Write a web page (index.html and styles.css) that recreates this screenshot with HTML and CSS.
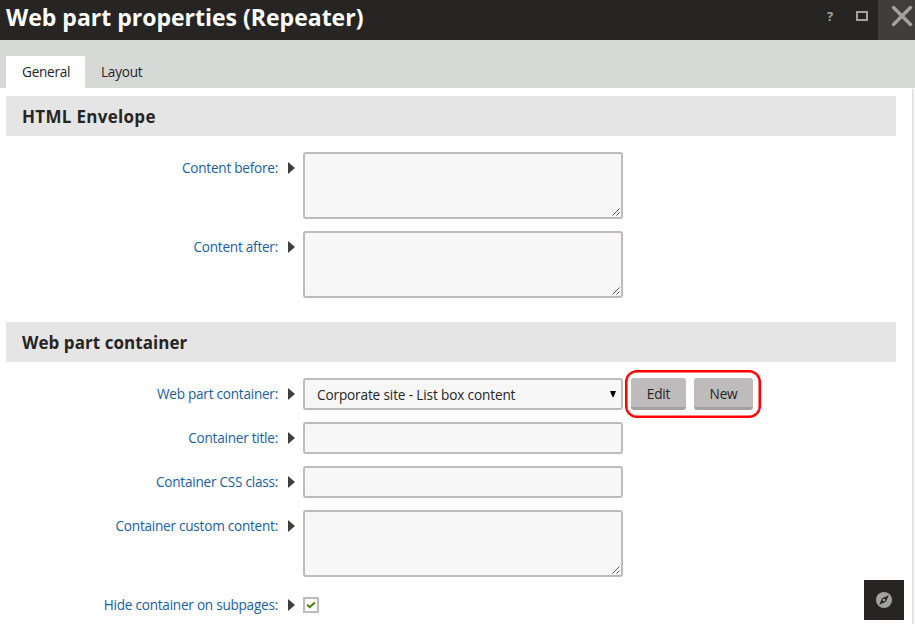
FILE: index.html
```html
<!DOCTYPE html>
<html lang="en">
<head>
<meta charset="utf-8">
<title>Web part properties (Repeater)</title>
<link rel="stylesheet" href="styles.css">
</head>
<body>
<header class="titlebar">
  <h1>Web part properties (Repeater)</h1>
  <div class="window-actions">
    <span class="help">?</span>
    <span class="maximize"></span>
    <span class="close"><svg width="37" height="40" viewBox="0 0 37 40"><path d="M15.5 7.5 32.5 24.5M32.5 7.5 15.5 24.5" stroke="#a3a2a2" stroke-width="3.4" stroke-linecap="round"/></svg></span>
  </div>
</header>
<nav class="tabs">
  <span class="tab active">General</span>
  <span class="tab">Layout</span>
</nav>
<div class="body">
<main class="content">
  <h2 class="first">HTML Envelope</h2>
  <div class="form">
    <div class="row"><label>Content before:</label><i class="arrow"></i><div class="field area"><svg class="grip" width="8" height="8" viewBox="0 0 8 8"><path d="M0.5 7.5 7.5 0.5M4.5 7.5 7.5 4.5"/></svg></div></div>
    <div class="row"><label>Content after:</label><i class="arrow"></i><div class="field area"><svg class="grip" width="8" height="8" viewBox="0 0 8 8"><path d="M0.5 7.5 7.5 0.5M4.5 7.5 7.5 4.5"/></svg></div></div>
  </div>
  <h2 class="second">Web part container</h2>
  <div class="form">
    <div class="row"><label>Web part container:</label><i class="arrow"></i><div class="field select"><span>Corporate site - List box content</span><svg width="6" height="6" viewBox="0 0 6 6"><path d="M0 0H6L3.5 6H2.5Z"/></svg></div>
      <div class="buttons"><span class="btn edit">Edit</span><span class="btn new">New</span></div></div>
    <div class="row"><label>Container title:</label><i class="arrow"></i><div class="field"></div></div>
    <div class="row"><label>Container CSS class:</label><i class="arrow"></i><div class="field"></div></div>
    <div class="row"><label>Container custom content:</label><i class="arrow"></i><div class="field area"><svg class="grip" width="8" height="8" viewBox="0 0 8 8"><path d="M0.5 7.5 7.5 0.5M4.5 7.5 7.5 4.5"/></svg></div></div>
    <div class="row"><label>Hide container on subpages:</label><i class="arrow"></i><span class="check"><svg width="12" height="12" viewBox="0 0 12 12"><path d="M2.2 5.8 4.8 8.2 9.8 3.6"/></svg></span></div>
  </div>
</main>
<div class="scroll"></div>
</div>
<div class="compass"><svg width="16" height="16" viewBox="0 0 16 16"><circle cx="8" cy="8" r="8" fill="#a3a2a2"/><path d="M12.8 3.2 9.8 9.8 3.2 12.8 6.2 6.2Z" fill="#262524"/><circle cx="8" cy="8" r="1.3" fill="#a3a2a2"/></svg></div>
</body>
</html>
```
FILE: styles.css
```css
* { box-sizing: border-box; }
body { margin: 0; width: 915px; height: 624px; overflow: hidden; background: #fff; color: #262524; font: 14px/20px "Open Sans", "Noto Sans", sans-serif; }
.titlebar { height: 40px; background: #262524; display: flex; justify-content: space-between; }
h1 { margin: 0; padding-left: 6px; font-size: 23px; line-height: 35px; color: #fff; font-weight: 700; white-space: nowrap; }
.window-actions { display: flex; color: #a3a2a2; }
.help { width: 16px; margin-right: 18px; text-align: center; font: 700 13px/32px "Open Sans", sans-serif; }
.maximize { width: 12px; height: 10px; margin: 11px 10px 0 0; border: 2px solid #a3a2a2; }
.close { width: 37px; height: 40px; background: #403e3d; }
.close svg { display: block; fill: none; }
.tabs { height: 48px; background: #d6d9d6; padding: 16px 0 0 6px; display: flex; }
.tab { height: 32px; padding: 0 16px; line-height: 32px; font-size: 13.6px; letter-spacing: -0.25px; white-space: nowrap; }
.tab.active { background: #fff; width: 79px; }
.body { display: flex; height: 536px; }
.content { width: 912px; padding: 8px 16px 0 6px; }
.scroll { width: 3px; margin-top: 1px; border-left: 1px solid #dcdcdc; background: #f3f3f3; }
h2 { margin: 0; height: 40px; padding-left: 16px; background: #e5e5e5; font-size: 17px; line-height: 41px; font-weight: 700; white-space: nowrap; }
h2.first { letter-spacing: 0.3px; }
h2.second { margin-top: 24px; letter-spacing: 0.05px; }
.form { padding-top: 16px; display: flex; flex-direction: column; gap: 12px; }
.row { display: flex; align-items: flex-start; }
label { width: 272px; text-align: right; color: #1a6099; line-height: 32px; font-size: 13.6px; letter-spacing: -0.25px; white-space: nowrap; }
.arrow { width: 0; height: 0; margin: 10px 8px 0 10px; border-left: 7px solid #403e3d; border-top: 6px solid transparent; border-bottom: 6px solid transparent; }
.field { width: 320px; height: 32px; border: 2px solid #bdbbbb; border-radius: 3px; background: #f7f7f7; }
.area { height: 67px; display: flex; align-items: flex-end; justify-content: flex-end; padding: 0 1px 1px 0; }
.grip path { fill: none; stroke: #555; stroke-width: 1; }
.select { display: flex; align-items: center; justify-content: space-between; padding: 2px 5px 0 12px; font-size: 13.6px; letter-spacing: -0.14px; white-space: nowrap; }
.select svg { margin-bottom: 3px; }
.buttons { display: flex; gap: 8px; width: 136px; height: 48px; margin: -8px 0 -8px 2px; padding: 6px 4px; border: 2px solid #f00; border-radius: 12px; box-shadow: inset 0 0 0 0.5px #f00; }
.btn { height: 32px; border-radius: 3px; border-bottom: 3px solid #a3a2a2; background: #bdbbbb; text-align: center; line-height: 32px; font-size: 13.6px; letter-spacing: -0.2px; }
.edit { width: 55px; }
.new { width: 59px; }
.check { width: 16px; height: 16px; margin-top: 8px; border: 2px solid #bdbbbb; background: #fff; }
.check svg { display: block; }
.check path { fill: none; stroke: #497d04; stroke-width: 2; }
.compass { position: absolute; left: 864px; top: 580px; width: 40px; height: 40px; background: #262524; padding: 12px; }
.compass svg { display: block; }
```
